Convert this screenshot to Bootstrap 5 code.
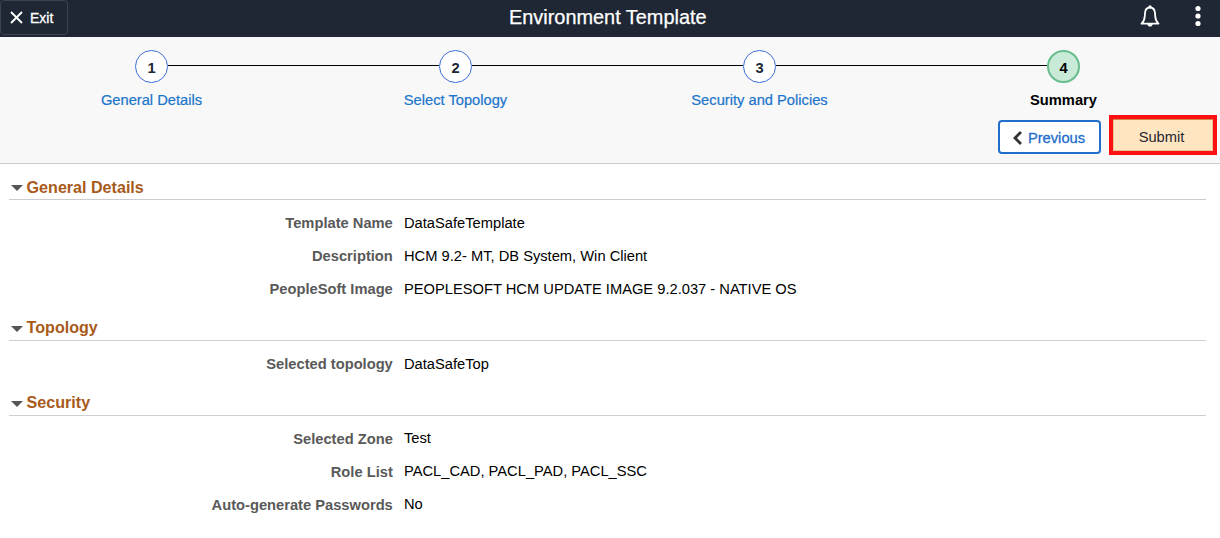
<!DOCTYPE html>
<html lang="en">
<head>
<meta charset="utf-8">
<meta name="viewport" content="width=device-width, initial-scale=1">
<title>Environment Template</title>
<link href="https://cdn.jsdelivr.net/npm/bootstrap@5.3.0/dist/css/bootstrap.min.css" rel="stylesheet">
<style>
  body { font-family: "Liberation Sans", Arial, sans-serif; font-size: 14.7px; line-height: 17px; color: #000; background: #fff; }
  .topbar { height: 37px; background: #1e2733; color: #fff; }
  .topbar h1 { font-size: 19.9px; line-height: 24px; padding-top: 5px; -webkit-text-stroke: .25px #fff; }
  .exit-btn { width: 68px; height: 35px; padding: 0 0 0 9px; border: 1px solid #3a434e; border-radius: 4px; color: #fff; font-size: 14px; line-height: 17px; gap: 7px; background: none; -webkit-text-stroke: .3px #fff; }
  .exit-btn span { padding-top: 1px; }
  .side { flex: 1 1 0; min-width: 0; }
  .side.left { flex-grow: 0; flex-basis: 509px; }
  .tools { padding: 5px 19.5px 0 0; gap: 35px; }
  .stage { height: 127px; background: #f8f8f8; border-bottom: 1px solid #ccc; }
  .steps { width: 1216px; margin-left: -1px; padding-top: 13px; }
  .step { width: 304px; }
  .track { height: 33px; }
  .track::before, .track::after { content: ""; flex: 1; height: 1px; background: #000; margin-bottom: 2px; }
  .step:first-child .track::before, .step:last-child .track::after { background: transparent; }
  .num { width: 33px; height: 33px; border: 1px solid #3c6bd6; border-radius: 50%; background: #fff; color: #1e2733; font-weight: 700; font-size: 14.7px; line-height: 17px; padding: 3px 0 0 1px; }
  .num.current { border: 2px solid #68bd8e; background: #c8ead7; color: #000; }
  .step-name { margin-top: 9px; padding-left: 1px; color: #1b74cb; -webkit-text-stroke: .2px #1b74cb; }
  .step-name.current { color: #000; font-weight: 700; -webkit-text-stroke: 0; }
  .actions { padding: 6px 3.5px 0 0; gap: 8px; }
  .prev-btn { width: 103px; height: 34px; margin-top: 5px; padding: 2px 0 0; border: 2px solid #216dca; border-radius: 4px; background: #fff; color: #216dca; font-size: 14.7px; line-height: 17px; gap: 6px; -webkit-text-stroke: .3px #216dca; }
  .submit-btn { width: 108px; height: 40px; padding: 5px 2px 0 0; border: 4px solid #fc1010; border-radius: 0; background: #ffe5c0; color: #1e2733; box-shadow: inset 0 1px 0 #cf8a4c, inset 0 0 0 1px #e8c594; font-size: 14.7px; line-height: 17px; }
  .group-box { margin: 0 14px 0 9px; }
  .group-title { height: 35px; padding: 12px 0 0 2px; border-bottom: 1px solid #ccd0d4; gap: 3.6px; font-size: 16.1px; line-height: 19px; color: #a85a1a; font-weight: 700; }
  .group-title svg { margin-top: 8px; }
  .group-title.first { height: 36px; padding-top: 14px; border-color: #ccc; }
  .group-title.first svg { margin-top: 7px; }
  .fields { padding-top: 7px; }
  .field-row { height: 33px; gap: 11.2px; padding-top: 8px; }
  .field-row dt { width: 383.8px; color: #595959; }
  .raised dd { margin-top: -1px; }
</style>
</head>
<body>
<header class="topbar d-flex align-items-start">
  <div class="side left"><button class="exit-btn btn d-flex align-items-center" type="button">
    <svg width="13" height="13" viewBox="0 0 13 13" fill="none" stroke="#fff" stroke-width="1.9"><path d="M1 1l11 11M12 1L1 12"/></svg><span>Exit</span></button></div>
  <h1 class="m-0 fw-normal">Environment Template</h1>
  <div class="side tools d-flex justify-content-end align-items-start">
    <svg width="20" height="22" viewBox="0 0 20 22" fill="none" stroke="#fff" stroke-width="1.8" stroke-linejoin="round"><path d="M1.5 18.7C3.9 16.6 4.6 14.4 4.8 11L5 8C5.3 4.6 7 2.5 10 2.5S14.7 4.6 15 8L15.2 11C15.4 14.4 16.1 16.6 18.5 18.7Z"/><circle cx="10" cy="1.9" r="1.7" fill="#fff" stroke="none"/><path d="M7.3 19h5.4c-.3 3.4-5.1 3.4-5.4 0Z" fill="#fff" stroke="none"/></svg>
    <svg width="6" height="22" viewBox="0 0 6 22" fill="#fff"><circle cx="3" cy="3.5" r="2.6"/><circle cx="3" cy="11" r="2.6"/><circle cx="3" cy="18.5" r="2.6"/></svg>
  </div>
</header>
<section class="stage">
  <div class="steps d-flex text-center">
    <div class="step"><div class="track d-flex align-items-center"><span class="num d-flex align-items-center justify-content-center">1</span></div><div class="step-name">General Details</div></div>
    <div class="step"><div class="track d-flex align-items-center"><span class="num d-flex align-items-center justify-content-center">2</span></div><div class="step-name">Select Topology</div></div>
    <div class="step"><div class="track d-flex align-items-center"><span class="num d-flex align-items-center justify-content-center">3</span></div><div class="step-name">Security and Policies</div></div>
    <div class="step"><div class="track d-flex align-items-center"><span class="num current d-flex align-items-center justify-content-center">4</span></div><div class="step-name current">Summary</div></div>
  </div>
  <div class="actions d-flex justify-content-end align-items-start">
    <button class="prev-btn btn d-flex align-items-center justify-content-center" type="button"><svg width="9" height="14" viewBox="0 0 9 14" fill="none" stroke="#333" stroke-width="2.8"><path d="M8 1L2 7l6 6"/></svg>Previous</button>
    <button class="submit-btn btn" type="button">Submit</button>
  </div>
</section>
<main>
  <section class="group-box">
    <h2 class="group-title first d-flex align-items-start m-0"><svg width="12" height="6" viewBox="0 0 12 6"><path d="M0 0h12L6 6z" fill="#555"/></svg>General Details</h2>
    <dl class="fields m-0">
      <div class="field-row d-flex"><dt class="text-end">Template Name</dt><dd class="mb-0">DataSafeTemplate</dd></div>
      <div class="field-row d-flex"><dt class="text-end">Description</dt><dd class="mb-0">HCM 9.2- MT, DB System, Win Client</dd></div>
      <div class="field-row d-flex"><dt class="text-end">PeopleSoft Image</dt><dd class="mb-0">PEOPLESOFT HCM UPDATE IMAGE 9.2.037 - NATIVE OS</dd></div>
    </dl>
  </section>
  <section class="group-box">
    <h2 class="group-title d-flex align-items-start m-0"><svg width="12" height="6" viewBox="0 0 12 6"><path d="M0 0h12L6 6z" fill="#555"/></svg>Topology</h2>
    <dl class="fields m-0">
      <div class="field-row d-flex"><dt class="text-end">Selected topology</dt><dd class="mb-0">DataSafeTop</dd></div>
    </dl>
  </section>
  <section class="group-box">
    <h2 class="group-title d-flex align-items-start m-0"><svg width="12" height="6" viewBox="0 0 12 6"><path d="M0 0h12L6 6z" fill="#555"/></svg>Security</h2>
    <dl class="fields raised m-0">
      <div class="field-row d-flex"><dt class="text-end">Selected Zone</dt><dd class="mb-0">Test</dd></div>
      <div class="field-row d-flex"><dt class="text-end">Role List</dt><dd class="mb-0">PACL_CAD, PACL_PAD, PACL_SSC</dd></div>
      <div class="field-row d-flex"><dt class="text-end">Auto-generate Passwords</dt><dd class="mb-0">No</dd></div>
    </dl>
  </section>
</main>
<script src="https://cdn.jsdelivr.net/npm/bootstrap@5.3.0/dist/js/bootstrap.bundle.min.js"></script>
</body>
</html>
